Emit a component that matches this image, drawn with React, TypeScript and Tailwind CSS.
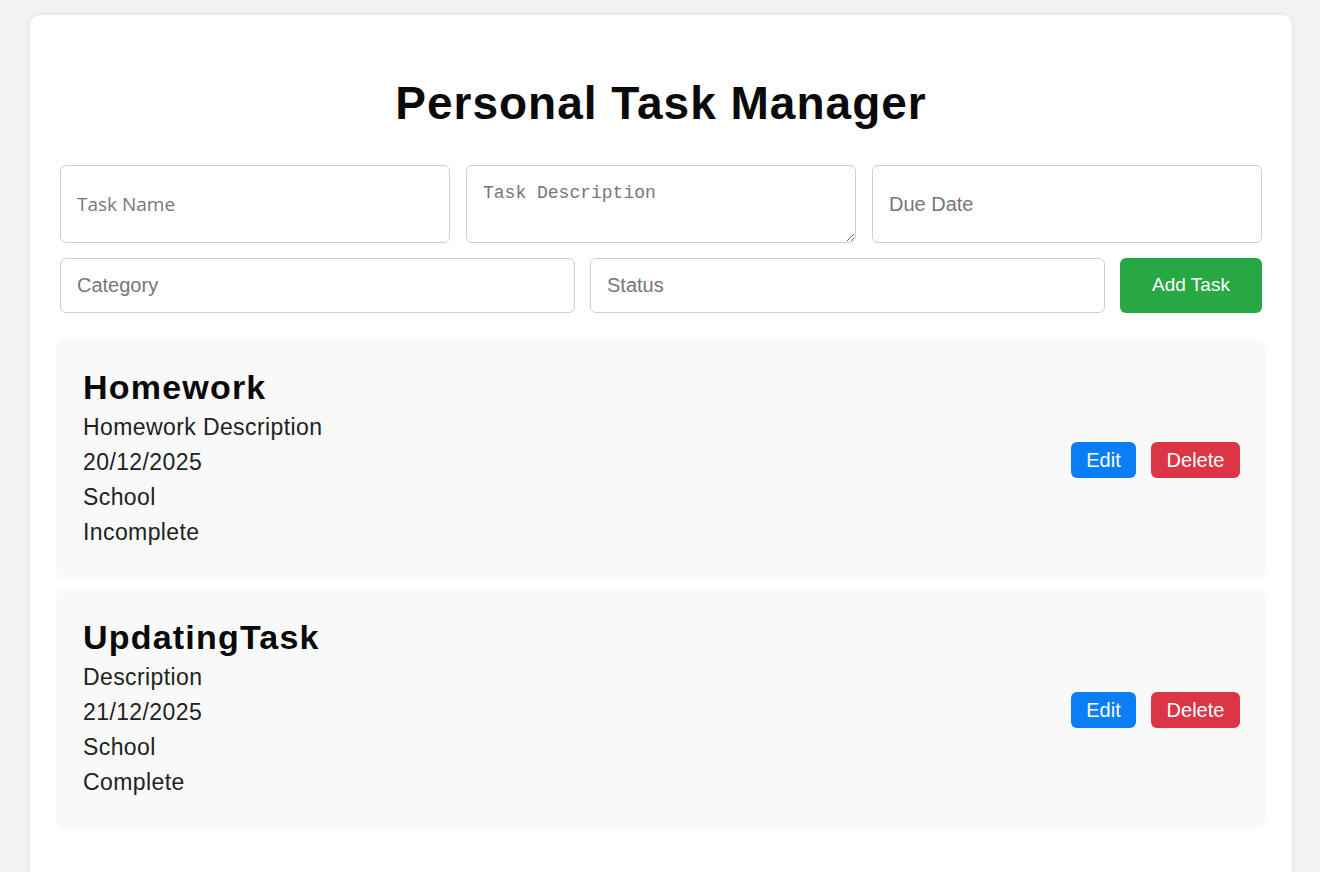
import React, { useState } from "react";

type Task = {
  name: string;
  description: string;
  dueDate: string;
  category: string;
  status: string;
};

const initialTasks: Task[] = [
  { name: "Homework", description: "Homework Description", dueDate: "20/12/2025", category: "School", status: "Incomplete" },
  { name: "UpdatingTask", description: "Description", dueDate: "21/12/2025", category: "School", status: "Complete" },
];

const inputBase =
  "w-full rounded-[6px] border-[1.5px] border-[#cfcfcf] bg-white px-[16px] text-[#222] outline-none placeholder:text-[#777]";

export default function App() {
  const [tasks, setTasks] = useState<Task[]>(initialTasks);
  const [form, setForm] = useState<Task>({ name: "", description: "", dueDate: "", category: "", status: "" });

  function handleChange(e: React.ChangeEvent<HTMLInputElement | HTMLTextAreaElement>) {
    setForm((p) => ({ ...p, [e.target.name]: e.target.value }));
  }

  function addTask() {
    if (!form.name) return;
    setTasks((p) => [...p, form]);
    setForm({ name: "", description: "", dueDate: "", category: "", status: "" });
  }

  function deleteTask(i: number) {
    setTasks((p) => p.filter((_, idx) => idx !== i));
  }

  function editTask(i: number) {
    setForm(tasks[i]);
    deleteTask(i);
  }

  return (
    <div className="min-h-[872px] bg-[#f2f2f2] pt-[15px] font-['Liberation_Sans',Arial,sans-serif]">
      <div className="ml-[30px] min-h-[900px] w-[1262px] rounded-[10px] bg-white px-[30px] pt-[61px] shadow-[0_0_6px_rgba(0,0,0,0.08)]">
        <h1 className="mb-[35px] text-center text-[46px] font-bold leading-[54px] tracking-[1px] text-[#0a0a0a]">
          Personal Task Manager
        </h1>

        <div className="grid grid-cols-3 gap-[16px]">
          <input
            name="name"
            value={form.name}
            onChange={handleChange}
            placeholder="Task Name"
            className={`${inputBase} h-[78px] font-['Open_Sans',sans-serif] text-[19px]`}
          />
          <textarea
            name="description"
            value={form.description}
            onChange={handleChange}
            placeholder="Task Description"
            className={`${inputBase} h-[78px] pt-[14px] font-['Liberation_Mono',monospace] text-[18px]`}
          />
          <input
            name="dueDate"
            value={form.dueDate}
            onChange={handleChange}
            placeholder="Due Date"
            className={`${inputBase} h-[78px] text-[20px]`}
          />
        </div>

        <div className="mt-[15px] flex gap-[15px]">
          <input
            name="category"
            value={form.category}
            onChange={handleChange}
            placeholder="Category"
            className={`${inputBase} h-[55px] flex-1 text-[20px]`}
          />
          <input
            name="status"
            value={form.status}
            onChange={handleChange}
            placeholder="Status"
            className={`${inputBase} h-[55px] flex-1 text-[20px]`}
          />
          <button
            onClick={addTask}
            className="h-[55px] w-[142px] shrink-0 rounded-[6px] bg-[#28a745] text-[19px] text-white"
          >
            Add Task
          </button>
        </div>

        <div className="-mx-[2px] mt-[27px] flex flex-col gap-[12px]">
          {tasks.map((t, i) => (
            <div
              key={i}
              className="flex items-center justify-between rounded-[8px] bg-[#f9f9f9] pb-[28px] pl-[25px] pr-[24px] pt-[25px] shadow-[0_0_5px_rgba(0,0,0,0.06)]"
            >
              <div>
                <h3 className="text-[34px] font-bold leading-[45px] tracking-[1.2px] text-[#0a0a0a]">{t.name}</h3>
                <p className="text-[23px] leading-[35px] tracking-[0.4px] text-[#222]">{t.description}</p>
                <p className="text-[23px] leading-[35px] tracking-[0.4px] text-[#222]">{t.dueDate}</p>
                <p className="text-[23px] leading-[35px] tracking-[0.4px] text-[#222]">{t.category}</p>
                <p className="text-[23px] leading-[35px] tracking-[0.4px] text-[#222]">{t.status}</p>
              </div>
              <div className="mt-[4px] flex gap-[15px]">
                <button
                  onClick={() => editTask(i)}
                  className="h-[36px] w-[65px] rounded-[6px] bg-[#0b7ef5] text-[20px] text-white"
                >
                  Edit
                </button>
                <button
                  onClick={() => deleteTask(i)}
                  className="h-[36px] w-[89px] rounded-[6px] bg-[#dc3545] text-[20px] text-white"
                >
                  Delete
                </button>
              </div>
            </div>
          ))}
        </div>
      </div>
    </div>
  );
}
